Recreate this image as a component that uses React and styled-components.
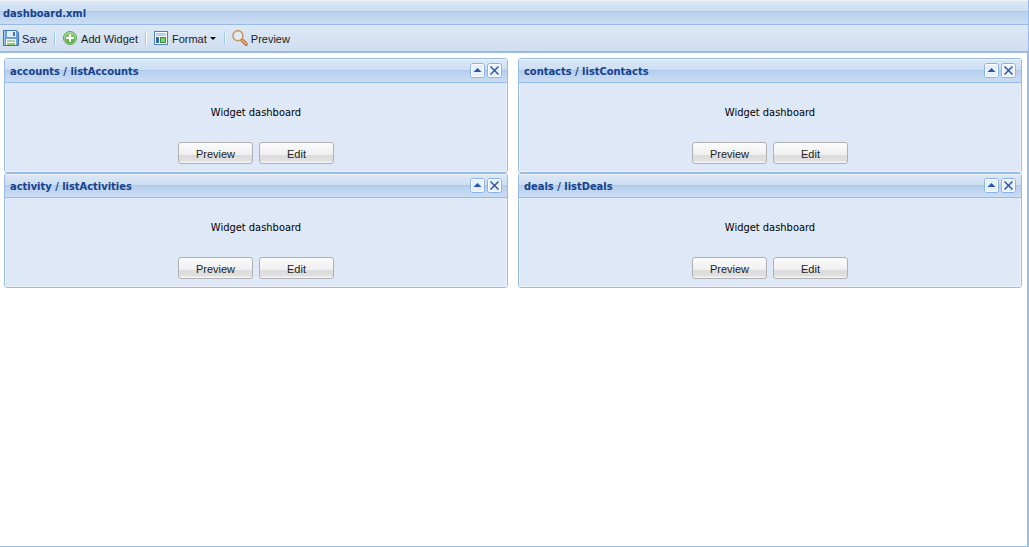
import React, { useState } from "react";
import styled, { createGlobalStyle } from "styled-components";

const GlobalStyle = createGlobalStyle`
  *, *::before, *::after { box-sizing: border-box; }
  body {
    margin: 0;
    background: #fff;
    font: 11px "DejaVu Sans Condensed", Tahoma, sans-serif;
    color: #000;
  }
`;

const Window = styled.main`
  display: flex;
  flex-direction: column;
  min-height: 100vh;
  border-right: 1px solid #99bbe8;
  border-bottom: 1px solid #99bbe8;
`;

const TitleBar = styled.header`
  height: 25px;
  padding: 1px 3px 0;
  border-top: 1px solid #eef2f7;
  border-bottom: 1px solid #99bbe8;
  background: linear-gradient(#dae7f6 0, #cddef3 10px, #abc7ec 10px, #abc7ec 11px, #b8cfee 11px, #cbddf3 23px);
`;

const Title = styled.h1`
  margin: 0;
  font: bold 11px/24px "DejaVu Sans Condensed", Tahoma, sans-serif;
  color: #15428b;
`;

const Toolbar = styled.nav`
  display: flex;
  align-items: center;
  height: 28px;
  padding: 0 1px 0 3px;
  border-bottom: 2px solid #99bbe8;
  background: linear-gradient(#dce8f5, #d0def0);
`;

const ToolButton = styled.button`
  display: flex;
  align-items: center;
  gap: 3px;
  height: 22px;
  padding: 0;
  border: 0;
  background: none;
  font: 11px "Liberation Sans", Arial, sans-serif;
  color: #222;
  cursor: pointer;

  svg { display: block; flex: none; }
`;

const ToolLabel = styled.span`
  padding-top: 2px;
`;

const Separator = styled.span`
  width: 2px;
  height: 14px;
  margin: 0 6px 0 7px;
  border-left: 1px solid #98c8ff;
  border-right: 1px solid #fff;
`;

const Portal = styled.section`
  display: grid;
  grid-template-columns: 1fr 1fr;
  align-content: start;
  column-gap: 10px;
  flex: 1;
  padding: 5px 5px 5px 4px;
  border-right: 1px solid #99bbe8;
`;

const Panel = styled.article`
  border: 1px solid #99bbe8;
  border-radius: 3px;
  background: #dfe8f6;
  overflow: hidden;
`;

const PanelHeader = styled.header`
  display: flex;
  align-items: center;
  gap: 2px;
  height: 24px;
  padding: 0 5px;
  border-bottom: 1px solid #99bbe8;
  background: linear-gradient(#f0f5fb 0, #f0f5fb 1px, #dae7f6 1px, #cddef3 11px, #abc7ec 11px, #abc7ec 12px, #b8cfee 12px, #cbddf3 23px);
`;

const PanelTitle = styled.h2`
  flex: 1;
  margin: 0;
  padding-top: 2px;
  font: bold 11px "DejaVu Sans Condensed", Tahoma, sans-serif;
  color: #15428b;
`;

const ToolIcon = styled.button`
  width: 15px;
  height: 15px;
  padding: 0;
  border: 0;
  background: none;
  cursor: pointer;

  svg { display: block; }
`;

const PanelBody = styled.div`
  display: flex;
  flex-direction: column;
  align-items: center;
  height: 89px;
  padding: 23px 0 7px;
  border: solid #eef3fb;
  border-width: 0 1px 1px;
`;

const Message = styled.p`
  margin: 0;
  line-height: 14px;
`;

const Actions = styled.div`
  display: flex;
  gap: 6px;
  margin-top: auto;
`;

const ActionButton = styled.button`
  width: 75px;
  height: 22px;
  padding: 2px 0 0;
  border: 1px solid #b0b1b4;
  border-radius: 3px;
  background: linear-gradient(#fbfbfb 0, #efefef 12px, #dcdcdc 12px, #e0e0e0 18px, #f4f4f4 19px);
  font: 11px "Liberation Sans", Arial, sans-serif;
  color: #222;
  cursor: pointer;
`;

const SaveIcon = () => (
  <svg width="16" height="16" viewBox="0 0 16 16" aria-hidden="true">
    <path d="M.5.5h13l2 2v13H.5z" fill="#6a9edb" stroke="#3f74b8" />
    <path d="M1.500 1v14" stroke="#9cc3ee" />
    <rect x="4" y="1" width="9" height="6" fill="#e4eefa" />
    <rect x="10" y="2" width="2" height="4" fill="#3f74b8" />
    <rect x="3" y="9" width="10" height="6" fill="#fff" />
    <rect x="4" y="10" width="8" height="2" fill="#a4d690" />
    <rect x="4" y="13" width="8" height="2" fill="#8cc878" />
  </svg>
);

const AddIcon = () => (
  <svg width="16" height="16" viewBox="0 0 16 16" aria-hidden="true">
    <defs>
      <linearGradient id="add" x1="0" y1="0" x2="0" y2="1">
        <stop offset="0" stopColor="#93d17e" />
        <stop offset="1" stopColor="#4fa53e" />
      </linearGradient>
    </defs>
    <circle cx="8" cy="8" r="6.500" fill="#bfe3b3" stroke="#5c9d52" />
    <circle cx="8" cy="8" r="5.500" fill="url(#add)" />
    <path d="M8 4v8M4 8h8" stroke="#fff" strokeWidth="2" />
  </svg>
);

const FormatIcon = () => (
  <svg width="16" height="16" viewBox="0 0 16 16" aria-hidden="true">
    <rect x="1.500" y="1.500" width="13" height="13" fill="#fff" stroke="#5080bd" />
    <rect x="3" y="3" width="10" height="3" fill="#b4cff0" />
    <rect x="3" y="7" width="3" height="6" fill="#3569ad" />
    <rect x="7.500" y="7.500" width="5" height="5" fill="#7fce68" stroke="#3f9136" />
  </svg>
);

const PreviewIcon = () => (
  <svg width="16" height="16" viewBox="0 0 16 16" aria-hidden="true">
    <path d="M10 10l4 4.200" stroke="#a9672a" strokeWidth="3.400" strokeLinecap="round" />
    <path d="M10 10l4 4" stroke="#f0b878" strokeWidth="1.600" strokeLinecap="round" />
    <circle cx="5.900" cy="5.700" r="5" fill="#e2eaf5" stroke="#c9965c" strokeWidth="1.500" />
  </svg>
);

const Caret = () => (
  <svg width="7" height="4" viewBox="0 0 7 4" aria-hidden="true">
    <path d="M0 1h6L3 4z" fill="#000" />
  </svg>
);

const ToolFrame = ({ children }) => (
  <svg width="15" height="15" viewBox="0 0 15 15" aria-hidden="true">
    <rect x=".5" y=".5" width="14" height="14" rx="2.500" fill="#e6f0fc" stroke="#8ab4e8" />
    <rect x="1.500" y="1.500" width="12" height="12" rx="1" fill="none" stroke="#fff" />
    {children}
  </svg>
);

function WidgetPanel({ title }) {
  const [open, setOpen] = useState(true);
  const [closed, setClosed] = useState(false);
  if (closed) return null;
  return (
    <Panel>
      <PanelHeader>
        <PanelTitle>{title}</PanelTitle>
        <ToolIcon type="button" aria-label={`Toggle ${title}`} aria-expanded={open} onClick={() => setOpen(!open)}>
          <ToolFrame><path d="M3.500 9h8l-4-4z" fill="#2a55ae" /></ToolFrame>
        </ToolIcon>
        <ToolIcon type="button" aria-label={`Close ${title}`} onClick={() => setClosed(true)}>
          <ToolFrame><path d="M3.500 3.500l8 8M11.500 3.500l-8 8" stroke="#2c519c" strokeWidth="1.400" /></ToolFrame>
        </ToolIcon>
      </PanelHeader>
      {open && (
        <PanelBody>
          <Message>Widget dashboard</Message>
          <Actions>
            <ActionButton type="button">Preview</ActionButton>
            <ActionButton type="button">Edit</ActionButton>
          </Actions>
        </PanelBody>
      )}
    </Panel>
  );
}

const widgets = [
  "accounts / listAccounts",
  "contacts / listContacts",
  "activity / listActivities",
  "deals / listDeals",
];

export default function App() {
  return (
    <>
      <GlobalStyle />
      <Window>
        <TitleBar><Title>dashboard.xml</Title></TitleBar>
        <Toolbar aria-label="Dashboard actions">
          <ToolButton type="button"><SaveIcon /><ToolLabel>Save</ToolLabel></ToolButton>
          <Separator />
          <ToolButton type="button"><AddIcon /><ToolLabel>Add Widget</ToolLabel></ToolButton>
          <Separator />
          <ToolButton type="button" aria-haspopup="menu"><FormatIcon /><ToolLabel>Format</ToolLabel><Caret /></ToolButton>
          <Separator />
          <ToolButton type="button"><PreviewIcon /><ToolLabel>Preview</ToolLabel></ToolButton>
        </Toolbar>
        <Portal>
          {widgets.map((title) => <WidgetPanel key={title} title={title} />)}
        </Portal>
      </Window>
    </>
  );
}
